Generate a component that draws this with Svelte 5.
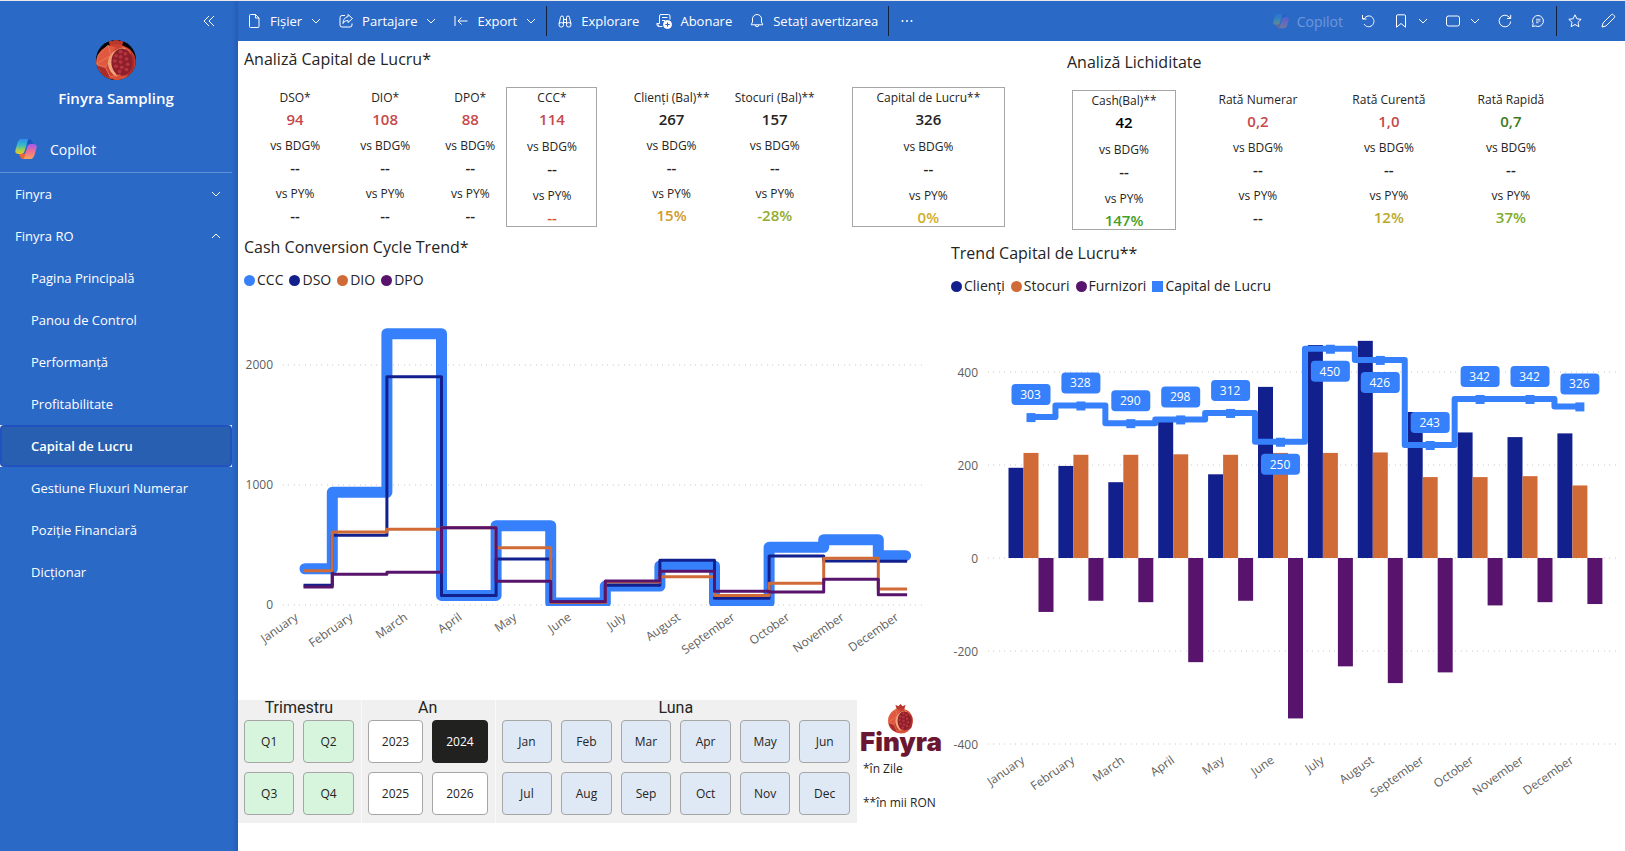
<script>
  const months = ['January', 'February', 'March', 'April', 'May', 'June', 'July', 'August', 'September', 'October', 'November', 'December'];

  const pages = ['Pagina Principală', 'Panou de Control', 'Performanță', 'Profitabilitate', 'Capital de Lucru', 'Gestiune Fluxuri Numerar', 'Poziție Financiară', 'Dicționar'];
  const currentPage = 'Capital de Lucru';

  const capitalGroups = [
    {
      grow: 343,
      cards: [
        { grow: 82, name: 'DSO*', value: '94', tone: 'red', bdg: '--', py: '--' },
        { grow: 98, name: 'DIO*', value: '108', tone: 'red', bdg: '--', py: '--' },
        { grow: 72, name: 'DPO*', value: '88', tone: 'red', bdg: '--', py: '--' },
        { grow: 91, name: 'CCC*', value: '114', tone: 'red', bdg: '--', py: '--', pyTone: 'rust', boxed: true }
      ]
    },
    {
      grow: 206,
      cards: [
        { grow: 100, name: 'Clienți (Bal)**', value: '267', bdg: '--', py: '15%', pyTone: 'amber' },
        { grow: 106, name: 'Stocuri (Bal)**', value: '157', bdg: '--', py: '-28%', pyTone: 'olive' }
      ]
    },
    { grow: 153, cards: [{ grow: 153, name: 'Capital de Lucru**', value: '326', bdg: '--', py: '0%', pyTone: 'gold', boxed: true }] }
  ];

  const liquidityGroups = [
    { grow: 104, cards: [{ grow: 104, name: 'Cash(Bal)**', value: '42', tone: 'black', bdg: '--', py: '147%', pyTone: 'green', boxed: true }] },
    {
      grow: 376,
      cards: [
        { grow: 132, name: 'Rată Numerar', value: '0,2', tone: 'red', bdg: '--', py: '--' },
        { grow: 130, name: 'Rată Curentă', value: '1,0', tone: 'red', bdg: '--', py: '12%', pyTone: 'mustard' },
        { grow: 114, name: 'Rată Rapidă', value: '0,7', tone: 'forest', bdg: '--', py: '37%', pyTone: 'lime' }
      ]
    }
  ];

  const blue = '#3780fb';
  const navy = '#12208e';
  const orange = '#d06b38';
  const purple = '#58146c';

  const cycle = [
    { name: 'CCC', color: blue, width: 11, cap: 'round', data: [302, 939, 2261, 80, 661, 16, 158, 325, 20, 481, 544, 411] },
    { name: 'DSO', color: navy, width: 3, cap: 'square', data: [164, 581, 1903, 80, 383, 28, 164, 372, 56, 408, 367, 364] },
    { name: 'DIO', color: orange, width: 3, cap: 'square', data: [286, 608, 631, 644, 478, 20, 192, 236, 80, 181, 389, 133] },
    { name: 'DPO', color: purple, width: 3, cap: 'square', data: [150, 256, 272, 644, 197, 28, 200, 281, 114, 108, 214, 86] }
  ];

  const customers = [194, 198, 163, 293, 180, 368, 458, 467, 314, 270, 260, 268];
  const stocks = [226, 222, 222, 223, 222, 226, 226, 227, 174, 174, 176, 156];
  const suppliers = [-116, -92, -95, -224, -92, -345, -233, -269, -246, -102, -95, -99];
  const capital = [303, 328, 290, 298, 312, 250, 450, 426, 243, 342, 342, 326];
  const labelBelow = [5, 6, 7];

  const trendLegend = [
    { name: 'Clienți', color: navy },
    { name: 'Stocuri', color: orange },
    { name: 'Furnizori', color: purple },
    { name: 'Capital de Lucru', color: blue, square: true }
  ];

  const cx = (i) => 67 + i * 54.6;
  const cy = (v) => 315 - v * 0.12;
  const tx = (i) => 63.5 + i * 49.9;
  const ty = (v) => 262 - v * 0.465;

  function stepPath(values, x, y) {
    let d = `M${x(0)} ${y(values[0])}`;
    for (let i = 1; i < values.length; i++) {
      d += `H${(x(i - 1) + x(i)) / 2}V${y(values[i])}`;
    }
    return d + `H${x(values.length - 1)}`;
  }

  const slicers = [
    { title: 'Trimestru', kind: 'quarter', cols: 2, items: ['Q1', 'Q2', 'Q3', 'Q4'] },
    { title: 'An', kind: 'year', cols: 2, items: ['2023', '2024', '2025', '2026'] },
    { title: 'Luna', kind: 'month', cols: 6, items: ['Jan', 'Feb', 'Mar', 'Apr', 'May', 'Jun', 'Jul', 'Aug', 'Sep', 'Oct', 'Nov', 'Dec'] }
  ];
  let selected = $state('2024');
</script>

{#snippet chevron(up = false)}
  <svg class="chev" viewBox="0 0 10 10" aria-hidden="true"><path d={up ? 'M1 7l4-4 4 4' : 'M1 3l4 4 4-4'} /></svg>
{/snippet}

{#snippet copilot(id)}
  <svg viewBox="0 0 22 22" aria-hidden="true">
    <defs>
      <linearGradient id="{id}-a" x1="0" y1="0" x2="0" y2="1">
        <stop offset="0" stop-color="#2f8cf0" /><stop offset=".4" stop-color="#36b8c8" /><stop offset=".75" stop-color="#a9cf4c" /><stop offset="1" stop-color="#f0c22c" />
      </linearGradient>
      <linearGradient id="{id}-b" x1="0" y1="0" x2="0" y2="1">
        <stop offset="0" stop-color="#a35af0" /><stop offset=".5" stop-color="#ee6f93" /><stop offset="1" stop-color="#f7a35a" />
      </linearGradient>
    </defs>
    <path fill="#1b55c4" d="M10 1h4c1.700 0 2.500 1 3 2.500L18 6h-4c-2 0-3 1-3.500 3L8 6z" />
    <path fill="#e8663c" d="M12 21H8c-1.700 0-2.500-1-3-2.500L4 16h4c2 0 3-1 3.500-3l2.500 3z" />
    <path fill="url(#{id}-a)" d="M14 1H7C4 1 3 3 2 6.500L.6 11.500C-.2 14.500.8 16 3.500 16H6c2 0 3-1 3.600-3l2.600-8.500C12.700 2.500 13 1 14 1z" />
    <path fill="url(#{id}-b)" d="M8 21h7c3 0 4-2 5-5.500l1.400-5c.8-3-.2-4.500-2.900-4.500H16c-2 0-3 1-3.600 3l-2.600 8.500C9.300 19.500 9 21 8 21z" />
  </svg>
{/snippet}

{#snippet pomegranate()}
  <path fill="#b9372c" d="M15 8L13 1l4 2 3-3 3 3 4-2-2 7z" />
  <circle cx="20" cy="23" r="17" fill="#c9402f" />
  <path fill="#e0593f" d="M5 16l8-9 7 2-5 7-4 12-8-3z" />
  <path fill="#a92c2b" d="M4 27l7 2 4 9-6-2zM31 11l5 8-1 13-5 5z" />
  <path fill="#d94f38" d="M23 7l9 4 1 6-6-6zM15 37l9-2 7 2-6 3h-6z" />
  <path fill="#f0a47c" d="M27 9c-8 1-13 6-14 14 0 6 3 12 8 14l-2-5c-3-5-3-13 2-17l8-4z" />
  <ellipse cx="25" cy="23" rx="9" ry="13" fill="#8c1f2b" />
  <g fill="#b8343d">
    <circle cx="24" cy="13" r="1.700" /><circle cx="28" cy="15" r="1.700" /><circle cx="20" cy="17" r="1.700" /><circle cx="24" cy="18" r="1.700" />
    <circle cx="29" cy="20" r="1.700" /><circle cx="19" cy="22" r="1.700" /><circle cx="24" cy="23" r="1.700" /><circle cx="30" cy="25" r="1.700" />
    <circle cx="20" cy="27" r="1.700" /><circle cx="25" cy="28" r="1.700" /><circle cx="29" cy="30" r="1.700" /><circle cx="23" cy="32" r="1.700" />
  </g>
  <path fill="none" stroke="#ee8b6a" stroke-width=".6" d="M5 16l8-9 3 10-5 11-8-3zM11 28l4 9 9-2M3 25l12-8" />
{/snippet}

{#snippet cards(groups)}
  <div class="groups">
    {#each groups as g}
      <div class="group" style:flex-grow={g.grow}>
        {#each g.cards as c}
          <article class="card" class:boxed={c.boxed} style:flex-grow={c.grow}>
            <div><h3>{c.name}</h3><p class={c.tone}>{c.value}</p></div>
            <div><h3>vs BDG%</h3><p>{c.bdg}</p></div>
            <div><h3>vs PY%</h3><p class={c.pyTone}>{c.py}</p></div>
          </article>
        {/each}
      </div>
    {/each}
  </div>
{/snippet}

<div class="app">
  <aside>
    <button class="collapse" aria-label="Restrângeți">
      <svg viewBox="0 0 12 12"><path d="M6 1L1 6l5 5M11 1L6 6l5 5" /></svg>
    </button>
    <svg class="avatar" viewBox="0 0 40 40" aria-hidden="true">
      <defs><clipPath id="round"><circle cx="20" cy="20" r="20" /></clipPath></defs>
      <g clip-path="url(#round)">
        <rect width="40" height="40" fill="#0a0505" />
        <svg x="-1" y="-2" width="42" height="43" viewBox="2 0 36 41" preserveAspectRatio="none">{@render pomegranate()}</svg>
      </g>
    </svg>
    <h1>Finyra Sampling</h1>
    <a class="copilot" href="#copilot">{@render copilot('side')}<span>Copilot</span></a>
    <nav>
      <button class="section">Finyra {@render chevron()}</button>
      <button class="section">Finyra RO {@render chevron(true)}</button>
      <ul>
        {#each pages as p}
          <li class:current={p === currentPage}><a href="#page" aria-current={p === currentPage ? 'page' : undefined}>{p}</a></li>
        {/each}
      </ul>
    </nav>
  </aside>

  <div class="main">
    <header>
      <button><svg viewBox="0 0 16 16"><path d="M4.500 1.500H9.500L13 5v8.500a1 1 0 0 1-1 1H4.500a1 1 0 0 1-1-1v-11a1 1 0 0 1 1-1zM9.500 1.500V5H13" /></svg>Fișier {@render chevron()}</button>
      <button><svg viewBox="0 0 16 16"><path d="M7 2.500H4a2 2 0 0 0-2 2V12a2 2 0 0 0 2 2h8a2 2 0 0 0 2-2v-1.500M10 1.500L14.500 5.500 10 9.500V7.500C7.500 7.500 6 8.500 5 10.500 5.200 6.500 7 4 10 3.800z" /></svg>Partajare {@render chevron()}</button>
      <button><svg viewBox="0 0 16 16"><path d="M2 3v10M14.500 8H5M8.500 4.500L5 8l3.500 3.500" /></svg>Export {@render chevron()}</button>
      <i></i>
      <button><svg viewBox="0 0 16 16"><path d="M2 11L3.500 4.500a1.500 1.500 0 0 1 3 0V11M14 11L12.500 4.500a1.500 1.500 0 0 0-3 0V11M6.500 6.500h3M6.500 9.500h3" /><circle cx="4.300" cy="11.800" r="2.300" /><circle cx="11.700" cy="11.800" r="2.300" /></svg>Explorare</button>
      <button><svg viewBox="0 0 16 16"><path d="M6.500 13.500H4a2 2 0 0 1-2-2v-1M3.500 10.500V3a1.500 1.500 0 0 1 1.500-1.500h7.500A1.500 1.500 0 0 1 14 3v3.500M3.500 10.500H.8c0 2 .8 3 2.200 3M6 4.500h5.500M6 7.500h3" /><circle cx="11.500" cy="11.500" r="4" fill="#fff" /><path d="M11.500 9.300v4.400M9.300 11.500h4.400" stroke="#2b69c7" /></svg>Abonare</button>
      <button><svg viewBox="0 0 16 16"><path d="M8 1.500a4.500 4.500 0 0 0-4.500 4.500v3L2.200 11.800h11.600L12.500 9V6A4.500 4.500 0 0 0 8 1.500zM6.300 12a1.700 1.700 0 0 0 3.400 0" /></svg>Setați avertizarea</button>
      <i></i>
      <button aria-label="Mai multe"><svg viewBox="0 0 16 16"><g fill="#fff" stroke="none"><circle cx="3.500" cy="8" r="1" /><circle cx="8" cy="8" r="1" /><circle cx="12.500" cy="8" r="1" /></g></svg></button>
      <button class="dim">{@render copilot('top')}Copilot</button>
      <button aria-label="Resetare"><svg viewBox="0 0 16 16"><path d="M2.500 2v4h4M2.800 5.700h1.500C6 2.600 10 2 12.300 4.400c2.400 2.500 2 6.200-.3 8.100-2.700 2.200-6.500 1.200-8-1.500" /></svg></button>
      <button aria-label="Marcaje"><svg viewBox="0 0 16 16"><path d="M3.500 14.200V3A1.200 1.200 0 0 1 4.700 1.800h6.600A1.200 1.200 0 0 1 12.500 3v11.200L8 10.500z" /></svg>{@render chevron()}</button>
      <button aria-label="Vizualizare"><svg viewBox="0 0 16 16"><rect x="1.500" y="3" width="13" height="10" rx="2" /></svg>{@render chevron()}</button>
      <button aria-label="Reîmprospătare"><svg viewBox="0 0 16 16"><path d="M13.700 8.500A5.800 5.800 0 1 1 12 3.900l1.500 1.400M13.700 1.800v3.700H10" /></svg></button>
      <button aria-label="Comentarii"><svg viewBox="0 0 16 16"><path d="M8 2.500a5.500 5.500 0 1 1-2.600 10.400L2.500 13.500l.7-2.900A5.500 5.500 0 0 1 8 2.500z" /><path d="M6 6.300h4.500M6 8h4.500M6 9.700h2.500" opacity=".8" /></svg></button>
      <i></i>
      <button aria-label="Favorite"><svg viewBox="0 0 16 16"><path d="M8 1.800l1.900 4 4.300.5-3.200 3 .9 4.400L8 11.500l-3.900 2.200.9-4.400-3.200-3 4.300-.5z" /></svg></button>
      <button aria-label="Editare"><svg viewBox="0 0 16 16"><path d="M2 14l1-4 8.200-8.200a1.500 1.500 0 0 1 2.200 0l.8.800a1.500 1.500 0 0 1 0 2.200L6 13z" /></svg></button>
    </header>

    <main>
      <div class="kpis">
        <section class="capital"><h2>Analiză Capital de Lucru*</h2>{@render cards(capitalGroups)}</section>
        <section class="liquidity"><h2>Analiză Lichiditate</h2>{@render cards(liquidityGroups)}</section>
      </div>

      <div class="panels">
        <div class="left">
          <section class="chart">
            <h2>Cash Conversion Cycle Trend*</h2>
            <ul class="legend">
              {#each cycle as s}<li><b style:background={s.color}></b>{s.name}</li>{/each}
            </ul>
            <svg viewBox="0 0 707 410" role="img" aria-label="Cash Conversion Cycle Trend">
              <defs><clipPath id="plot"><rect x="0" y="0" width="707" height="316" /></clipPath></defs>
              {#each [2000, 1000, 0] as v}
                <line class="grid" x1="45" x2="688" y1={cy(v)} y2={cy(v)} />
                <text class="tick" x="35" y={cy(v) + 4}>{v}</text>
              {/each}
              <g clip-path="url(#plot)" fill="none" stroke-linejoin="round">
                {#each cycle as s}
                  <path d={stepPath(s.data, cx, cy)} stroke={s.color} stroke-width={s.width} stroke-linecap={s.cap} />
                {/each}
              </g>
              {#each months as m, i}
                <text class="tick" transform="translate({cx(i) - 6} {329}) rotate(-35)">{m}</text>
              {/each}
            </svg>
          </section>

          <div class="bottom">
            <div class="slicers">
              {#each slicers as s}
                <section class={s.kind}>
                  <h4>{s.title}</h4>
                  <div class="options" style:grid-template-columns="repeat({s.cols}, 1fr)">
                    {#each s.items as item}
                      <button class:on={selected === item} aria-pressed={selected === item} onclick={() => (selected = item)}>{item}</button>
                    {/each}
                  </div>
                </section>
              {/each}
            </div>
            <div class="brand">
              <svg viewBox="2 0 36 41" aria-hidden="true">{@render pomegranate()}</svg>
              <strong>Finyra</strong>
              <p>*în Zile</p>
              <p>**în mii RON</p>
            </div>
          </div>
        </div>

        <section class="chart right">
          <h2>Trend Capital de Lucru**</h2>
          <ul class="legend">
            {#each trendLegend as s}<li><b class:square={s.square} style:background={s.color}></b>{s.name}</li>{/each}
          </ul>
          <svg viewBox="0 0 680 530" role="img" aria-label="Trend Capital de Lucru">
            {#each [400, 200, 0, -200, -400] as v}
              <line class="grid" x1="43" x2="673" y1={ty(v)} y2={ty(v)} />
              <text class="tick" x="33" y={ty(v) + 5}>{v}</text>
            {/each}
            {#each months as m, i}
              <rect x={tx(i)} y={ty(customers[i])} width="15" height={customers[i] * 0.465} fill={navy} />
              <rect x={tx(i) + 15} y={ty(stocks[i])} width="15" height={stocks[i] * 0.465} fill={orange} />
              <rect x={tx(i) + 30} y={ty(0)} width="15" height={-suppliers[i] * 0.465} fill={purple} />
              <text class="tick" transform="translate({tx(i) + 17} {466}) rotate(-35)">{m}</text>
            {/each}
            <path d={stepPath(capital, (i) => tx(i) + 22, ty)} fill="none" stroke={blue} stroke-width="6" stroke-linejoin="round" />
            {#each capital as v, i}
              {@const y = ty(v) + (labelBelow.includes(i) ? 22 : -23)}
              <rect x={tx(i) + 18} y={ty(v) - 4} width="9" height="9" fill={blue} />
              <rect x={tx(i) + 3} y={y - 10} width="39" height="21" rx="4" fill={blue} />
              <text class="bubble" x={tx(i) + 22} y={y + 5}>{v}</text>
            {/each}
          </svg>
        </section>
      </div>
    </main>
  </div>
</div>

<style>
  :global(body) { margin: 0; background: #fff; }
  .app {
    display: flex;
    min-height: 100vh;
    box-sizing: border-box;
    border-top: 1px solid #e9e9e9;
    font-family: "Open Sans", "Noto Sans", sans-serif;
    color: #252423;
  }
  h1, h2, h3, h4, p, ul { margin: 0; padding: 0; font-weight: 400; }
  ul { list-style: none; }
  button { border: 0; background: none; color: inherit; font: inherit; padding: 0; cursor: pointer; }
  a { color: inherit; text-decoration: none; }
  svg { flex: none; }

  aside {
    width: 238px;
    flex: none;
    box-sizing: border-box;
    padding-right: 6px;
    background: linear-gradient(to left, #255db5, #2b69c7 6px);
    color: #fff;
    display: flex;
    flex-direction: column;
    font-size: 13px;
  }
  .collapse { align-self: flex-end; margin: 14px 17px 0 0; height: 12px; }
  .collapse svg { display: block; width: 12px; height: 12px; }
  .collapse path, .chev path { fill: none; stroke: currentColor; stroke-width: 1; }
  .avatar { width: 40px; height: 40px; align-self: center; margin-top: 13px; }
  h1 { font-size: 15px; line-height: 24px; font-weight: 600; text-align: center; margin-top: 6px; }
  .copilot { display: flex; align-items: center; gap: 13px; height: 46px; padding-left: 15px; margin-top: 16px; border-bottom: 1px solid #6290d6; }
  .copilot { font-size: 14px; }
  .copilot svg { width: 22px; height: 22px; }
  .section { display: flex; width: 100%; height: 42px; align-items: center; justify-content: space-between; padding: 0 11px 0 15px; }
  .chev { width: 10px; height: 10px; }
  li a { display: flex; align-items: center; height: 42px; padding-left: 31px; }
  .current { background: #fff; }
  .current a { box-sizing: border-box; padding-left: 29px; background: #285fb0; border: 2px solid #2252c0; border-radius: 4px; font-weight: 600; }

  .main { flex: 1; min-width: 0; }
  header { display: flex; align-items: center; gap: 17px; height: 40px; padding: 0 9px 0 8px; background: #2b69c7; color: #fff; font-size: 13px; }
  header button { display: flex; align-items: center; gap: 8px; white-space: nowrap; }
  header button > svg:first-child { width: 16px; height: 16px; fill: none; stroke: #fff; stroke-width: 1; }
  header .chev { margin-left: 1px; }
  header i { width: 1px; height: 30px; background: #14213d; margin: 0 -7px; }
  header .dim { margin-left: auto; opacity: .3; font-size: 14px; }
  header .dim > svg:first-child { stroke: none; }

  h2 { font-size: 16px; line-height: 24px; }
  .kpis { display: grid; grid-template-columns: 820fr 567fr; }
  .capital { padding: 6px 53px 0 6px; }
  .liquidity { padding: 9px 57px 5px 9px; }
  .groups { display: flex; gap: 24px; margin-top: 16px; padding-left: 10px; }
  .liquidity .groups { gap: 16px; padding-left: 5px; }
  .group { display: flex; flex-basis: 0; min-width: 0; }
  .card { flex-basis: 0; min-width: 0; box-sizing: border-box; display: flex; flex-direction: column; gap: 9px; padding-top: 1px; border: 1px solid transparent; text-align: center; white-space: nowrap; }
  .liquidity .card { padding-top: 0; }
  .card.boxed { gap: 10px; padding-top: 1px; border-color: #a6a6a6; }
  .card > div { display: flex; flex-direction: column; align-items: center; gap: 3px; }
  h3 { font-size: 12px; line-height: 18px; }
  .card p { font-size: 15px; line-height: 18px; font-weight: 600; }
  .card .red { color: #c5494b; }
  .card .rust { color: #d64f2f; }
  .card .amber { color: #cf9a2b; }
  .card .olive { color: #93ab2e; }
  .card .gold { color: #d0ad28; }
  .card .green { color: #43a02a; }
  .card .mustard { color: #b9a92b; }
  .card .forest { color: #3f7a1e; }
  .card .lime { color: #7fac2a; }
  .card .black { color: #000; }

  .panels { display: grid; grid-template-columns: 707fr 680fr; }
  .left, .right { min-width: 0; }
  .chart h2, .legend { padding-left: 6px; }
  .right { padding-top: 6px; }
  .chart > svg { display: block; width: 100%; height: auto; }
  .legend { display: flex; gap: 6px; margin-top: 11px; font-size: 14px; line-height: 20px; }
  .legend li { display: flex; align-items: center; gap: 2px; }
  .legend b { width: 11px; height: 11px; border-radius: 50%; }
  .legend .square { border-radius: 0; }
  .grid { stroke: #c8c8c8; stroke-width: 1; stroke-dasharray: 1 4 1 5; }
  .tick { font-size: 12px; fill: #605e5c; text-anchor: end; }
  .bubble { font-size: 12px; fill: #fff; text-anchor: middle; }

  .bottom { display: grid; grid-template-columns: 619fr 85fr; gap: 3px; }
  .slicers { display: grid; grid-template-columns: 123fr 133fr 362fr; gap: 1px; background: #fafafa; }
  .slicers section { padding: 0 7px 7px 6px; background: #f0f0f0; }
  h4 { font: 400 16px/15px Roboto, sans-serif; text-align: center; margin-bottom: 5px; }
  .options { display: grid; gap: 9px; }
  .options button { height: 43px; border: 1px solid #a6a6a6; border-radius: 4px; background: #fff; font-size: 12px; text-align: center; }
  .quarter .options button { background: #d6f5dc; }
  .month .options button { background: #dfe9f6; }
  .options button.on { background: #21211f; border-color: #21211f; color: #fff; }
  .brand { display: flex; flex-direction: column; align-items: flex-start; white-space: nowrap; }
  .brand svg { width: 29px; height: 30px; margin: 4px 0 -6px 26px; }
  .brand strong { font: 900 26px/27px Inter, sans-serif; color: #6b1733; }
  .brand p { font-size: 12px; line-height: 18px; margin: 5px 0 11px 3px; }
</style>
